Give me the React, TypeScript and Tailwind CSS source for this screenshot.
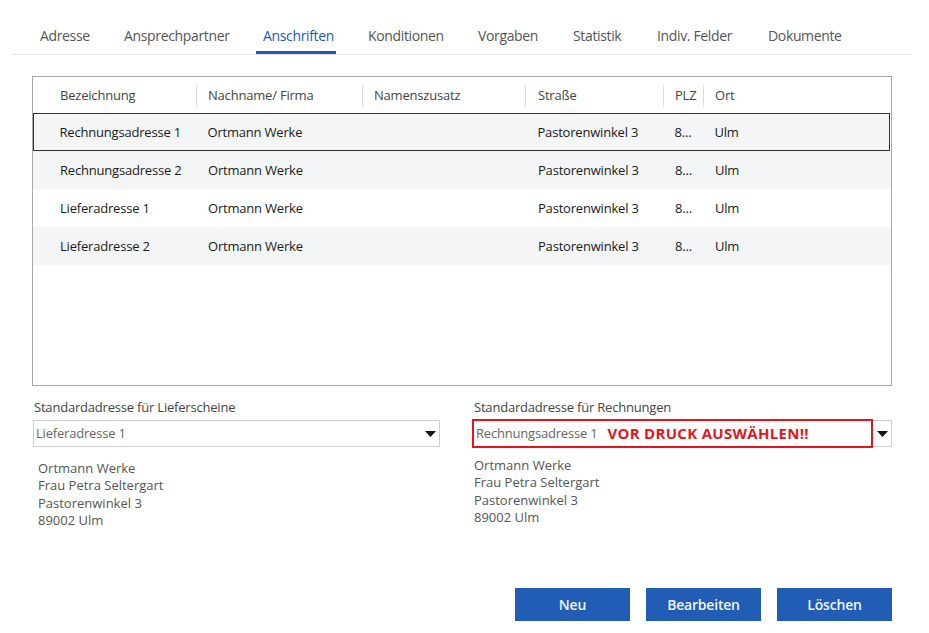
import React from "react";

const tabs = [
  { t: "Adresse", w: "w-[84px]" },
  { t: "Ansprechpartner", w: "w-[139px]" },
  { t: "Anschriften", w: "w-[105px]" },
  { t: "Konditionen", w: "w-[110px]" },
  { t: "Vorgaben", w: "w-[95px]" },
  { t: "Statistik", w: "w-[84px]" },
  { t: "Indiv. Felder", w: "w-[111px]" },
  { t: "Dokumente", w: "w-[90px]" },
];

const rows = [
  { b: "Rechnungsadresse 1", n: "Ortmann Werke", s: "Pastorenwinkel 3", p: "8...", o: "Ulm" },
  { b: "Rechnungsadresse 2", n: "Ortmann Werke", s: "Pastorenwinkel 3", p: "8...", o: "Ulm" },
  { b: "Lieferadresse 1", n: "Ortmann Werke", s: "Pastorenwinkel 3", p: "8...", o: "Ulm" },
  { b: "Lieferadresse 2", n: "Ortmann Werke", s: "Pastorenwinkel 3", p: "8...", o: "Ulm" },
];

function Arrow() {
  return (
    <svg width="11" height="6" viewBox="0 0 11 6" className="block">
      <path d="M0 0 L11 0 L5.5 6 Z" fill="#111" />
    </svg>
  );
}

function Address() {
  return (
    <div className="text-[13px] leading-[17.3px] text-[#555]">
      <div>Ortmann Werke</div>
      <div>Frau Petra Seltergart</div>
      <div>Pastorenwinkel 3</div>
      <div>89002 Ulm</div>
    </div>
  );
}

export default function App() {
  return (
    <div
      className="w-[929px] h-[633px] bg-white flex flex-col overflow-hidden"
      style={{ fontFamily: '"Open Sans", "Noto Sans", Arial, sans-serif' }}
    >
      {/* Tabs */}
      <div className="mx-[12px] w-[900px] h-[55px] border-b border-[#e2e2e2] flex pl-[22px]">
        {tabs.map(({ t, w }) => {
          const active = t === "Anschriften";
          return (
            <div key={t} className={"relative shrink-0 h-full flex items-center pt-[18px] pl-[6px] " + w}>
              <span
                className={
                  "whitespace-nowrap text-[14px] leading-[20px] tracking-[-0.35px] " +
                  (active ? "text-[#2158b8]" : "text-[#555]")
                }
              >
                {t}
              </span>
              {active && <div className="absolute left-[-1px] w-[80px] bottom-0 h-[3px] bg-[#2158b8]" />}
            </div>
          );
        })}
      </div>

      {/* Table */}
      <div className="ml-[32px] mt-[21px] w-[860px] h-[310px] border border-[#a8a8a8] flex flex-col">
        <div className="h-[36px] pt-[2px] flex items-center text-[13px] text-[#444] tracking-[-0.2px]">
          <div className="w-[163px] pl-[27px] flex items-center h-[22px]">Bezeichnung</div>
          <div className="w-[166px] pl-[11px] flex items-center border-l border-[#dcdcdc] h-[22px]">Nachname/ Firma</div>
          <div className="w-[163px] pl-[11px] flex items-center border-l border-[#dcdcdc] h-[22px]">Namenszusatz</div>
          <div className="w-[138px] pl-[12px] flex items-center border-l border-[#dcdcdc] h-[22px]">Straße</div>
          <div className="w-[40px] pl-[11px] flex items-center border-l border-[#dcdcdc] h-[22px]">PLZ</div>
          <div className="flex-1 pl-[11px] flex items-center border-l border-[#dcdcdc] h-[22px]">Ort</div>
        </div>
        {rows.map((r, i) => {
          const sel = i === 0;
          return (
            <div
              key={i}
              className={
                "h-[38px] pt-[1px] flex items-center text-[13px] text-[#1a1a1a] tracking-[-0.2px] " +
                (sel ? "border-[1.5px] border-[#333] mr-[1px] bg-[#f4f5f7]" : i % 2 === 1 ? "bg-[#f4f5f7]" : "bg-white")
              }
            >
              <div className={sel ? "w-[161.5px] pl-[25.5px]" : "w-[163px] pl-[27px]"}>{r.b}</div>
              <div className="w-[166px] pl-[12px]">{r.n}</div>
              <div className="w-[163px] pl-[12px]"></div>
              <div className="w-[138px] pl-[13px]">{r.s}</div>
              <div className="w-[40px] pl-[12px]">{r.p}</div>
              <div className="flex-1 pl-[12px]">{r.o}</div>
            </div>
          );
        })}
      </div>

      {/* Default addresses */}
      <div className="ml-[33px] mt-[12px] grid grid-cols-[407px_419px] gap-x-[33px]">
        <div>
          <div className="pl-[1px] text-[13px] leading-[18px] text-[#444] tracking-[-0.2px]">Standardadresse für Lieferscheine</div>
          <div className="mt-[4px] h-[27px] border border-[#cfcfcf] flex items-center justify-between pl-[2px] pr-[3px]">
            <span className="text-[13px] text-[#666] tracking-[-0.2px]">Lieferadresse 1</span>
            <Arrow />
          </div>
          <div className="mt-[13px] pl-[5px]">
            <Address />
          </div>
        </div>
        <div>
          <div className="pl-[1px] text-[13px] leading-[18px] text-[#444] tracking-[-0.2px]">Standardadresse für Rechnungen</div>
          <div className="mt-[3px] h-[29px] flex">
            <div className="w-[401px] -ml-[1px] h-full border-2 border-[#e8141c] flex items-center pl-[2px]">
              <span className="text-[13px] text-[#666] tracking-[-0.2px]">Rechnungsadresse 1</span>
              <span className="ml-[10px] text-[15px] font-bold text-[#e8141c] tracking-[0.3px]">VOR DRUCK AUSWÄHLEN!!</span>
            </div>
            <div className="flex-1 h-[27px] mt-[1px] border border-l-0 border-[#cfcfcf] flex items-center justify-center">
              <Arrow />
            </div>
          </div>
          <div className="mt-[9px] pl-[1px]">
            <Address />
          </div>
        </div>
      </div>

      {/* Buttons */}
      <div className="mt-auto mb-[12px] ml-[515px] flex gap-[16px]">
        {["Neu", "Bearbeiten", "Löschen"].map((b) => (
          <button
            key={b}
            className="w-[115px] h-[33px] bg-[#215cb5] text-[#eef4ff] text-[14px] font-semibold tracking-[-0.2px]"
          >
            {b}
          </button>
        ))}
      </div>
    </div>
  );
}
